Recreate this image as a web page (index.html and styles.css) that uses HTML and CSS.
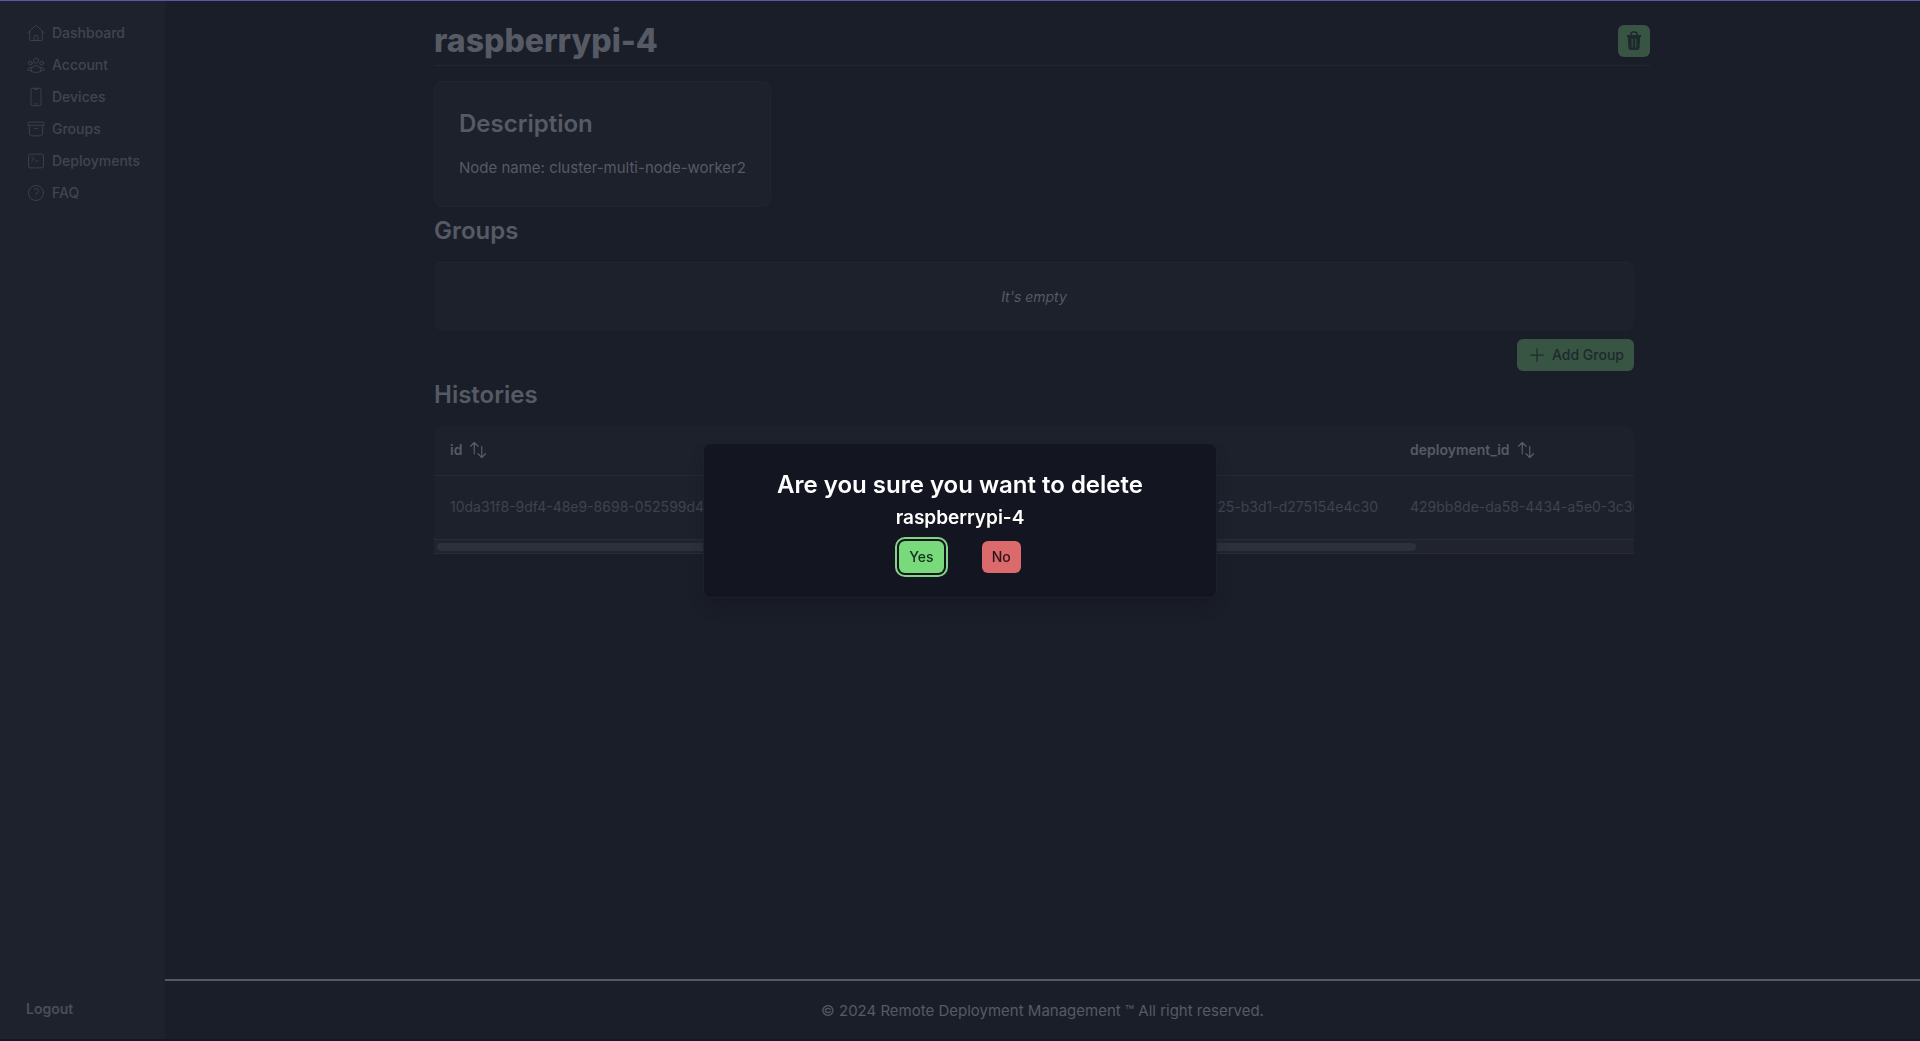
FILE: index.html
```html
<!DOCTYPE html>
<html lang="en">
<head>
<meta charset="utf-8">
<meta name="viewport" content="width=device-width, initial-scale=1">
<title>raspberrypi-4 – Remote Deployment Management</title>
<link rel="stylesheet" href="styles.css">
</head>
<body>
<div class="app">
  <aside class="sidebar">
    <nav class="menu" aria-label="Main">
      <a class="menu-link" href="#dashboard"><svg class="icon" viewBox="0 0 24 24"><path d="m2.25 12 8.954-8.955a1.126 1.126 0 0 1 1.591 0L21.75 12M4.5 9.75v10.125c0 .621.504 1.125 1.125 1.125H9.75v-4.875c0-.621.504-1.125 1.125-1.125h2.25c.621 0 1.125.504 1.125 1.125V21h4.125c.621 0 1.125-.504 1.125-1.125V9.75M8.25 21h8.25"/></svg>Dashboard</a>
      <a class="menu-link" href="#account"><svg class="icon" viewBox="0 0 24 24"><path d="M18 18.72a9.094 9.094 0 0 0 3.741-.479 3 3 0 0 0-4.682-2.72m.94 3.198.001.031c0 .225-.012.447-.037.666A11.944 11.944 0 0 1 12 21c-2.17 0-4.207-.576-5.963-1.584A6.062 6.062 0 0 1 6 18.719m12 0a5.971 5.971 0 0 0-.941-3.197m0 0A5.995 5.995 0 0 0 12 12.75a5.995 5.995 0 0 0-5.058 2.772m0 0a3 3 0 0 0-4.681 2.72 8.986 8.986 0 0 0 3.74.477m.94-3.197a5.971 5.971 0 0 0-.94 3.197M15 6.75a3 3 0 1 1-6 0 3 3 0 0 1 6 0Zm6 3a2.25 2.25 0 1 1-4.5 0 2.25 2.25 0 0 1 4.5 0Zm-13.5 0a2.25 2.25 0 1 1-4.5 0 2.25 2.25 0 0 1 4.5 0Z"/></svg>Account</a>
      <a class="menu-link" href="#devices"><svg class="icon" viewBox="0 0 24 24"><path d="M10.5 1.5H8.25A2.25 2.25 0 0 0 6 3.75v16.5a2.25 2.25 0 0 0 2.25 2.25h7.5A2.25 2.25 0 0 0 18 20.25V3.75a2.25 2.25 0 0 0-2.25-2.25H13.5m-3 0V3h3V1.5m-3 0h3m-3 18.75h3"/></svg>Devices</a>
      <a class="menu-link" href="#groups"><svg class="icon" viewBox="0 0 24 24"><path d="m20.25 7.5-.625 10.632a2.25 2.25 0 0 1-2.247 2.118H6.622a2.25 2.25 0 0 1-2.247-2.118L3.75 7.5M10 11.25h4M3.375 7.5h17.25c.621 0 1.125-.504 1.125-1.125v-1.5c0-.621-.504-1.125-1.125-1.125H3.375c-.621 0-1.125.504-1.125 1.125v1.5c0 .621.504 1.125 1.125 1.125Z"/></svg>Groups</a>
      <a class="menu-link" href="#deployments"><svg class="icon" viewBox="0 0 24 24"><path d="m6.75 7.5 3 2.25-3 2.25m4.5 0h3m-9 8.25h13.5A2.25 2.25 0 0 0 21 18V6a2.25 2.25 0 0 0-2.25-2.25H5.25A2.25 2.25 0 0 0 3 6v12a2.25 2.25 0 0 0 2.25 2.25Z"/></svg>Deployments</a>
      <a class="menu-link" href="#faq"><svg class="icon" viewBox="0 0 24 24"><path d="M9.879 7.519c1.171-1.025 3.071-1.025 4.242 0 1.172 1.025 1.172 2.687 0 3.712-.203.179-.43.326-.67.442-.745.361-1.45.999-1.45 1.827v.75M21 12a9 9 0 1 1-18 0 9 9 0 0 1 18 0Zm-9 5.25h.008v.008H12v-.008Z"/></svg>FAQ</a>
    </nav>
    <a class="logout" href="#logout">Logout</a>
  </aside>

  <div class="page">
    <main class="content">
      <header class="title-bar">
        <h1>raspberrypi-4</h1>
        <button class="btn btn-icon" type="button" aria-label="Delete device"><svg class="trash" viewBox="0 0 16 20"><path d="M5 4V3q0-2 2-2h2q2 0 2 2v1" fill="none" stroke="currentColor" stroke-width="1.5"/><path d="M1 4h14v2h-.8l-.7 11q-.2 2-2 2h-7q-1.800 0-2-2L1.800 6H1z" fill="currentColor"/><path d="M6.200 7.500v9M9.800 7.500v9" class="slot"/></svg></button>
      </header>

      <section class="card">
        <h2>Description</h2>
        <p>Node name: cluster-multi-node-worker2</p>
      </section>

      <section class="block">
        <h2>Groups</h2>
        <p class="empty">It's empty</p>
        <div class="actions">
          <button class="btn" type="button"><svg class="icon" viewBox="0 0 24 24"><path d="M12 4.500v15m7.500-7.500h-15"/></svg>Add Group</button>
        </div>
      </section>

      <section class="block">
        <h2>Histories</h2>
        <div class="table-box">
          <table>
            <thead>
              <tr>
                <th scope="col"><span class="sort">id <svg class="icon" viewBox="0 0 24 24"><path d="M3 7.500 7.500 3m0 0L12 7.500M7.500 3v13.500m13.500 0L16.500 21m0 0L12 16.500m4.500 4.500V7.500"/></svg></span></th>
                <td></td>
                <td></td>
                <th scope="col"><span class="sort">deployment_id <svg class="icon" viewBox="0 0 24 24"><path d="M3 7.500 7.500 3m0 0L12 7.500M7.500 3v13.500m13.500 0L16.500 21m0 0L12 16.500m4.500 4.500V7.500"/></svg></span></th>
              </tr>
            </thead>
            <tbody>
              <tr>
                <td>10da31f8-9df4-48e9-8698-052599d4</td>
                <td></td>
                <td class="end">25-b3d1-d275154e4c30</td>
                <td>429bb8de-da58-4434-a5e0-3c36</td>
              </tr>
            </tbody>
          </table>
        </div>
        <div class="scroll-track"><div class="scroll-thumb"></div></div>
      </section>
    </main>
    <footer class="footer">© 2024 Remote Deployment Management ™ All right reserved.</footer>
  </div>
</div>

<div class="overlay">
  <dialog class="dialog" open aria-labelledby="confirm-title">
    <h2 id="confirm-title">Are you sure you want to delete</h2>
    <h3>raspberrypi-4</h3>
    <div class="choices">
      <button class="btn btn-yes" type="button">Yes</button>
      <button class="btn btn-no" type="button">No</button>
    </div>
  </dialog>
</div>
</body>
</html>
```
FILE: styles.css
```css
* {
  box-sizing: border-box;
}

body {
  margin: 0;
  background: #1a1e29;
  color: #565a64;
  font: 15px/24px Inter, "Liberation Sans", sans-serif;
}

h1, h2, h3, p {
  margin: 0;
}

h2 {
  font-size: 24px;
  line-height: 32px;
  font-weight: 600;
}

.app {
  display: flex;
  min-height: 100vh;
  border-top: 1px solid #5859a8;
  border-bottom: 2px solid #171724;
}

.icon {
  width: 20px;
  height: 20px;
  flex: none;
  fill: none;
  stroke: currentColor;
  stroke-width: 1.5;
  stroke-linecap: round;
  stroke-linejoin: round;
}

/* Sidebar */
.sidebar {
  display: flex;
  flex-direction: column;
  justify-content: space-between;
  width: 165px;
  flex: none;
  padding: 16px 26px;
  background: #1e222d;
  font-size: 14px;
  line-height: 20px;
}

.menu {
  display: flex;
  flex-direction: column;
}

.menu-link {
  display: flex;
  align-items: center;
  gap: 6px;
  height: 32px;
  color: #414550;
  font-weight: 500;
  text-decoration: none;
}

.menu-link .icon {
  stroke-width: 1;
}

.logout {
  padding-bottom: 4px;
  color: #4a4e59;
  font-weight: 600;
  text-decoration: none;
}

/* Page */
.page {
  display: flex;
  flex: 1;
  flex-direction: column;
  min-width: 0;
}

.content {
  flex: 1;
  width: 100%;
  max-width: 1217px;
  margin: 0 auto;
  padding: 16px 17px 0 0;
}

.title-bar {
  display: flex;
  justify-content: space-between;
  align-items: center;
  height: 49px;
  margin-right: -16px;
  border-bottom: 1px solid #232731;
}

h1 {
  font-size: 32px;
  line-height: 40px;
  font-weight: 800;
}

.btn {
  display: inline-flex;
  align-items: center;
  gap: 5px;
  height: 32px;
  padding: 0 10px;
  border: 0;
  border-radius: 6px;
  background: #385443;
  color: #1c2a2d;
  font: 500 14px/20px Inter, "Liberation Sans", sans-serif;
}

.btn-icon {
  justify-content: center;
  width: 32px;
  padding: 0;
}

.trash {
  width: 16px;
  height: 20px;
}

.slot {
  fill: none;
  stroke: #385443;
  stroke-width: 1;
}

.card {
  width: fit-content;
  margin-top: 15px;
  padding: 26px 24px 22px;
  border: 1px solid #20242e;
  border-radius: 8px;
  background: #1d212c;
}

.card p {
  padding: 16px 0 4px;
}

.block h2 {
  padding: 8px 0 15px;
}

.empty {
  padding: 24px;
  border-top: 1px solid #232731;
  border-radius: 8px;
  background: #1d212c;
  font-size: 14px;
  line-height: 20px;
  font-style: italic;
  text-align: center;
}

.actions {
  display: flex;
  justify-content: flex-end;
  padding-top: 8px;
}

/* History table */
.table-box {
  overflow: hidden;
  border-radius: 8px 8px 0 0;
  background: #1d212c;
}

table {
  width: 1280px;
  table-layout: fixed;
  border-collapse: collapse;
  font-size: 14px;
  line-height: 20px;
}

thead {
  border-bottom: 1px solid #252933;
}

th {
  height: 49px;
  padding: 0 16px;
  font-weight: 600;
  text-align: left;
}

td {
  padding: 0 16px;
  color: #3f434e;
  white-space: nowrap;
}

tbody td {
  height: 64px;
}

.end {
  text-align: right;
}

.sort {
  display: flex;
  align-items: center;
  gap: 6px;
}

.scroll-track {
  padding: 3px 3px 2px;
  border: solid #282c35;
  border-width: 1px 0;
  background: #21242e;
}

.scroll-thumb {
  width: 82%;
  height: 8px;
  border-radius: 4px;
  background: #2d313b;
}

.footer {
  padding: 18px 16px 16px;
  border-top: 2px solid #565a64;
  text-align: center;
}

/* Confirmation dialog */
.overlay {
  position: fixed;
  inset: 0;
  display: grid;
  place-items: center;
}

.dialog {
  position: static;
  width: 514px;
  margin: 0;
  padding: 25px 24px 24px;
  border: 1px solid #1e212d;
  border-radius: 8px;
  background: #131520;
  box-shadow: 0 10px 15px -3px #13152066;
  color: #fff;
  text-align: center;
}

h3 {
  font-size: 19px;
  line-height: 33px;
  font-weight: 600;
}

.choices {
  display: flex;
  justify-content: center;
  gap: 38px;
  padding-top: 7px;
}

.btn-yes {
  background: #79da7b;
  color: #12301f;
  outline: 2px solid #84d488;
  outline-offset: 2px;
}

.btn-no {
  background: #da6a6b;
  color: #301219;
}
```
